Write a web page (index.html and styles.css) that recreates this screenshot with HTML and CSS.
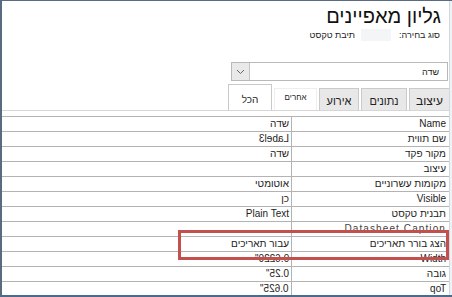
FILE: index.html
```html
<!DOCTYPE html>
<html lang="he" dir="rtl">
<head>
    <meta charset="UTF-8">
    <title>גליון מאפיינים</title>
    <link rel="stylesheet" href="styles.css">
</head>
<body>

    <div class="sheet">
        <div class="pane">
            <h1 class="title">גליון מאפיינים</h1>
            <div class="sel-type">
                <span>סוג בחירה:</span>
                <span class="sel-blank"></span>
                <span>תיבת טקסט</span>
            </div>

            <div class="picker">
                <span class="picker-text">שדה</span>
                <span class="picker-btn">
                    <svg width="9" height="6" viewBox="0 0 9 6"><path d="M1 1 L4.5 4.5 L8 1" fill="none" stroke="#666" stroke-width="1"/></svg>
                </span>
            </div>

            <div class="tabs">
                <div class="tab tab-format">עיצוב</div>
                <div class="tab tab-data">נתונים</div>
                <div class="tab tab-event">אירוע</div>
                <div class="tab tab-other">אחרים</div>
                <div class="tab tab-all active">הכל</div>
            </div>

            <div class="grid">
                <div class="row"><div class="label">Name</div><div class="value">שדה</div></div>
                <div class="row"><div class="label">שם תווית</div><div class="value"><span class="mirror">Label3</span></div></div>
                <div class="row"><div class="label">מקור פקד</div><div class="value">שדה</div></div>
                <div class="row"><div class="label">עיצוב</div><div class="value"></div></div>
                <div class="row"><div class="label">מקומות עשרוניים</div><div class="value">אוטומטי</div></div>
                <div class="row"><div class="label">Visible</div><div class="value">כן</div></div>
                <div class="row"><div class="label">תבנית טקסט</div><div class="value">Plain Text</div></div>
                <div class="row"><div class="label"><span class="spaced">Datasheet Caption</span></div><div class="value"></div></div>
                <div class="row"><div class="label">הצג בורר תאריכים</div><div class="value">עבור תאריכים</div></div>
                <div class="row"><div class="label">Width</div><div class="value"><span class="mirror">0.6229"</span></div></div>
                <div class="row"><div class="label">גובה</div><div class="value"><span class="mirror">0.25"</span></div></div>
                <div class="row"><div class="label"><span class="mirror">Top</span></div><div class="value"><span class="mirror">0.625"</span></div></div>
            </div>

            <div class="callout"></div>
        </div>
    </div>

</body>
</html>
```

FILE: styles.css
```css
body {
    margin: 0;
    font-family: "Liberation Sans", Arial, sans-serif;
    color: #222;
    background: #fff;
}
.sheet {
    width: 452px;
    height: 297px;
    box-sizing: border-box;
    border-left: 2px solid #586b80;
    border-top: 1px solid #586b80;
    border-bottom: 2px solid #4b6b8e;
    background: #eef2f6;
    overflow: hidden;
}
.pane {
    position: relative;
    width: 447px;
    height: 100%;
    background: #fff;
    border-right: 1px solid #d3d8dd;
    margin-right: 2px;
    overflow: hidden;
}
.title {
    margin: 0;
    padding: 2px 8px 0 0;
    font-size: 20px;
    font-weight: normal;
    line-height: 26px;
    color: #111;
}
.sel-type {
    display: flex;
    align-items: center;
    padding-right: 9px;
    font-size: 9px;
    line-height: 12px;
    height: 12px;
}
.sel-blank {
    width: 30px;
    height: 12px;
    margin: 0 8px 0 6px;
    background: #f3f5f7;
}
.picker {
    display: flex;
    justify-content: space-between;
    align-items: center;
    width: 215px;
    height: 17px;
    margin: 21px 1px 0 0;
    border: 1px solid #b9b9b9;
    font-size: 9px;
}
.picker-text {
    padding-right: 8px;
}
.picker-btn {
    display: flex;
    align-items: center;
    justify-content: center;
    width: 17px;
    height: 17px;
    border-right: 1px solid #c4c4c4;
    background: #e9e9e9;
}
.tabs {
    display: flex;
    align-items: flex-end;
    gap: 2px;
    height: 26px;
    margin-top: 3px;
    border-bottom: 1px solid #d6d6d6;
}
.tab {
    box-sizing: border-box;
    height: 22px;
    border: 1px solid #cacaca;
    border-bottom: none;
    background: #e8e8e8;
    text-align: center;
    font-size: 10px;
    line-height: 24px;
}
.tab-format {
    width: 40px;
    font-size: 12px;
    border-right: none;
}
.tab-data {
    width: 46px;
    font-size: 11px;
}
.tab-event {
    width: 40px;
    font-size: 11px;
}
.tab-other {
    width: 43px;
    font-size: 8px;
    line-height: 17px;
    background: #fff;
    border-color: #eee;
}
.tab-all {
    width: 44px;
}
.tab.active {
    height: 26px;
    background: #fff;
    border-color: #c9c9c9;
    line-height: 30px;
}
.grid {
    margin-top: 5px;
    border-top: 1px solid #b3b3b3;
}
.row {
    display: grid;
    grid-template-columns: 158px 1fr;
    height: 15px;
    box-sizing: border-box;
    border-bottom: 1px solid #b3b3b3;
    font-size: 10px;
    line-height: 14px;
}
.label {
    padding-right: 3px;
    border-left: 1px solid #b3b3b3;
    white-space: nowrap;
}
.value {
    padding-right: 2px;
    white-space: nowrap;
}
.mirror {
    display: inline-block;
    transform: scaleX(-1);
    direction: ltr;
}
.spaced {
    letter-spacing: 1.1px;
    color: #444;
}
.callout {
    position: absolute;
    left: 176px;
    top: 229px;
    width: 265px;
    height: 24px;
    border: 3px solid #c4504e;
}
```
